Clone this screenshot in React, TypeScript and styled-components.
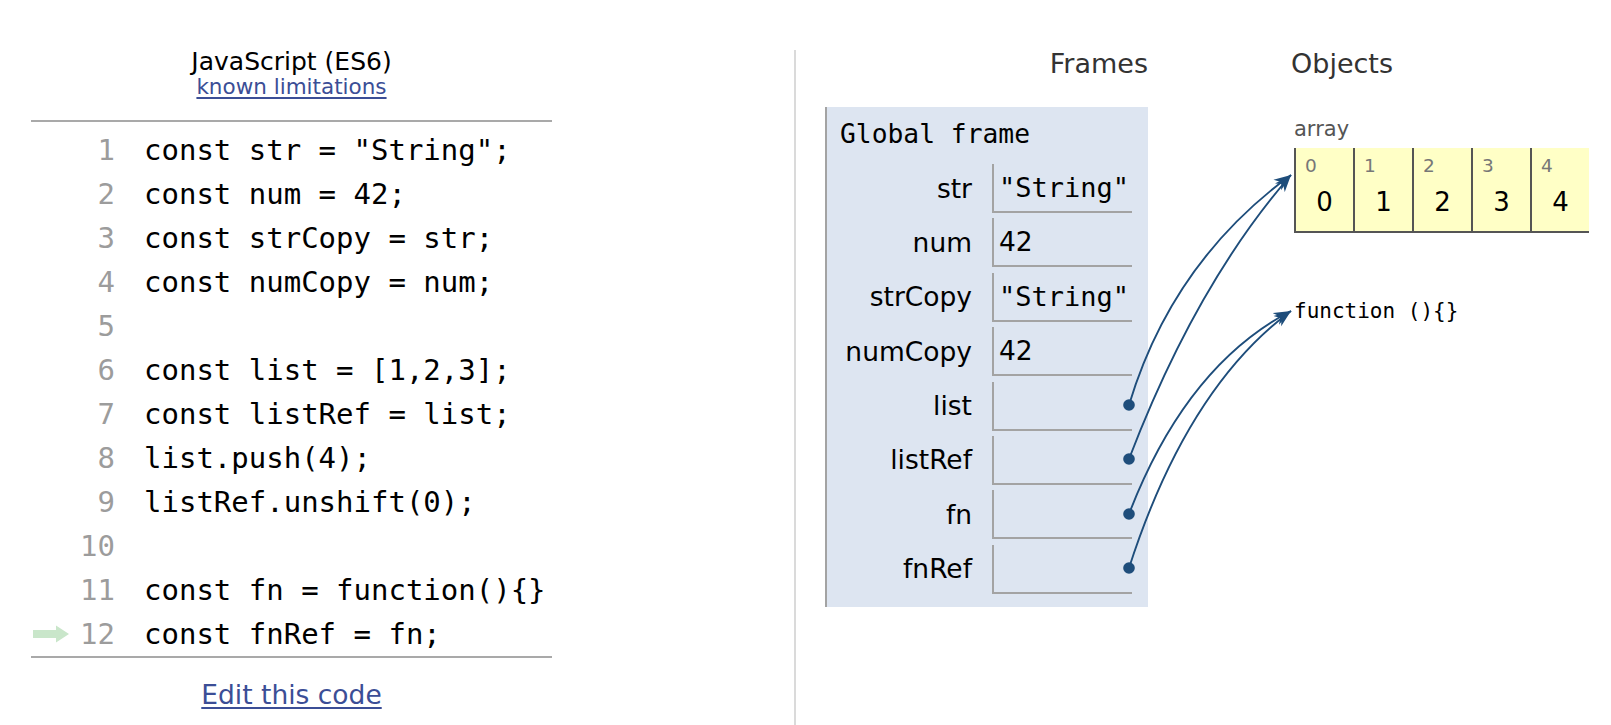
import React from "react"
import styled, { createGlobalStyle } from "styled-components"

const MONO = `"DejaVu Sans Mono", Menlo, monospace`
const SANS = `"DejaVu Sans", Verdana, sans-serif`
const ARROW = "#1e4d7b"

const GlobalStyle = createGlobalStyle`
    html, body {
        margin: 0;
        padding: 0;
        background: #fff;
        overflow: hidden;
    }
    body {
        font-family: ${SANS};
        color: #000;
    }
`

const codeLines = [
    'const str = "String";',
    "const num = 42;",
    "const strCopy = str;",
    "const numCopy = num;",
    "",
    "const list = [1,2,3];",
    "const listRef = list;",
    "list.push(4);",
    "listRef.unshift(0);",
    "",
    "const fn = function(){}",
    "const fnRef = fn;",
]

const currentLine = 12

type Binding = { name: string; value?: string; kind: "str" | "num" | "ref" }

const globals: Binding[] = [
    { name: "str", value: '"String"', kind: "str" },
    { name: "num", value: "42", kind: "num" },
    { name: "strCopy", value: '"String"', kind: "str" },
    { name: "numCopy", value: "42", kind: "num" },
    { name: "list", kind: "ref" },
    { name: "listRef", kind: "ref" },
    { name: "fn", kind: "ref" },
    { name: "fnRef", kind: "ref" },
]

const arrayItems = [0, 1, 2, 3, 4]

// pointer curves, from the dot in a frame slot to the heap object
const pointers = [
    { from: [1129, 405], ctrl: [1172, 262], to: [1291, 175] },
    { from: [1129, 459], ctrl: [1196, 284], to: [1291, 175] },
    { from: [1129, 514], ctrl: [1186, 366], to: [1291, 311] },
    { from: [1129, 568], ctrl: [1187, 388], to: [1291, 311] },
]

export default function App() {
    return (
        <Page>
            <GlobalStyle />
            <CodePanel>
                <Lang>JavaScript (ES6)</Lang>
                <Link href="#" $size={21.5} $lh={24}>known limitations</Link>
                <CodeBox>
                    {codeLines.map((line, i) => (
                        <CodeLine key={i}>
                            <Gutter>
                                {i + 1 === currentLine && (
                                    <svg width="36" height="18" viewBox="0 0 36 18">
                                        <path d="M0 5H23V0.5L36 9L23 17.5V13H0Z" fill="#c9e6ca" />
                                    </svg>
                                )}
                            </Gutter>
                            <LineNo>{i + 1}</LineNo>
                            <Code>{line}</Code>
                        </CodeLine>
                    ))}
                </CodeBox>
                <EditRow>
                    <Link href="#" $size={26.5} $lh={30}>Edit this code</Link>
                </EditRow>
            </CodePanel>

            <VizPanel>
                <FramesCol>
                    <ColHeader $align="right">Frames</ColHeader>
                    <Frame>
                        <FrameTitle>Global frame</FrameTitle>
                        <VarGrid>
                            {globals.map((b) => (
                                <React.Fragment key={b.name}>
                                    <VarName>{b.name}</VarName>
                                    <VarValue $mono={b.kind === "str"}>{b.value}</VarValue>
                                </React.Fragment>
                            ))}
                        </VarGrid>
                    </Frame>
                </FramesCol>
                <ObjectsCol>
                    <ColHeader $align="left">Objects</ColHeader>
                    <Heap>
                        <TypeLabel>array</TypeLabel>
                        <ArrayRow>
                            {arrayItems.map((v, i) => (
                                <ArrayCell key={i}>
                                    <ArrayIndex>{i}</ArrayIndex>
                                    <ArrayValue>{v}</ArrayValue>
                                </ArrayCell>
                            ))}
                        </ArrayRow>
                        <FuncObj>function (){"{}"}</FuncObj>
                    </Heap>
                </ObjectsCol>
            </VizPanel>

            <Arrows width="1611" height="725" viewBox="0 0 1611 725">
                <defs>
                    <marker
                        id="head"
                        markerUnits="userSpaceOnUse"
                        markerWidth="18"
                        markerHeight="14"
                        refX="17"
                        refY="7"
                        orient="auto"
                    >
                        <path d="M0 0.5L17 7L0 13.5L5 7Z" fill={ARROW} />
                    </marker>
                </defs>
                {pointers.map((p, i) => (
                    <g key={i}>
                        <path
                            d={`M${p.from[0]} ${p.from[1]} Q${p.ctrl[0]} ${p.ctrl[1]} ${p.to[0]} ${p.to[1]}`}
                            fill="none"
                            stroke={ARROW}
                            strokeWidth="1.9"
                            markerEnd="url(#head)"
                        />
                        <circle cx={p.from[0]} cy={p.from[1]} r="5.8" fill={ARROW} />
                    </g>
                ))}
            </Arrows>
        </Page>
    )
}

const Page = styled.div`
    position: relative;
    display: flex;
    align-items: flex-start;
    width: 1611px;
    height: 725px;
`

const CodePanel = styled.div`
    margin-left: 31px;
    width: 521px;
    padding-top: 48px;
    display: flex;
    flex-direction: column;
    align-items: center;
`

const Lang = styled.div`
    font-size: 25px;
    line-height: 27px;
    color: #000;
`

const Link = styled.a<{ $size: number; $lh: number }>`
    font-size: ${(p) => p.$size}px;
    line-height: ${(p) => p.$lh}px;
    color: #3b4e96;
    text-decoration: underline;
    text-underline-offset: 3px;
`

const CodeBox = styled.div`
    align-self: stretch;
    margin-top: 21px;
    padding-top: 6px;
    border-top: 2px solid #a9a9a9;
    border-bottom: 2px solid #a9a9a9;
`

const CodeLine = styled.div`
    display: grid;
    grid-template-columns: 40px 44px 1fr;
    align-items: center;
    height: 44px;
    font-family: ${MONO};
    font-size: 29px;
    white-space: pre;
`

const Gutter = styled.div`
    display: flex;
    align-items: center;
    padding-left: 2px;
`

const LineNo = styled.div`
    text-align: right;
    color: #9c9c9c;
`

const Code = styled.div`
    padding-left: 29px;
    color: #000;
`

const EditRow = styled.div`
    margin-top: 22px;
`

const VizPanel = styled.div`
    margin-left: 242px;
    margin-top: 50px;
    height: 675px;
    border-left: 2px solid #dadada;
    padding-left: 29px;
    display: flex;
    gap: 143px;
`

const FramesCol = styled.div`
    width: 323px;
    display: flex;
    flex-direction: column;
`

const ColHeader = styled.div<{ $align: "left" | "right" }>`
    font-size: 27px;
    line-height: 28px;
    color: #333;
    text-align: ${(p) => p.$align};
`

const Frame = styled.div`
    margin-top: 29px;
    background: #dde5f1;
    border-left: 2px solid #a3a3a3;
    padding: 9px 16px 13px 13px;
`

const FrameTitle = styled.div`
    font-family: ${MONO};
    font-size: 26.3px;
    line-height: 36px;
`

const VarGrid = styled.div`
    margin-top: 12px;
    display: grid;
    grid-template-columns: 1fr 140px;
    column-gap: 20px;
    row-gap: 5.4px;
`

const VarName = styled.div`
    align-self: center;
    text-align: right;
    font-size: 26.5px;
    line-height: 30px;
`

const VarValue = styled.div<{ $mono: boolean }>`
    height: 47px;
    display: flex;
    align-items: center;
    padding-left: 5px;
    border-left: 2px solid #a3a3a3;
    border-bottom: 2px solid #a3a3a3;
    font-family: ${(p) => (p.$mono ? MONO : SANS)};
    font-size: ${(p) => (p.$mono ? 27 : 26.5)}px;
    white-space: pre;
`

const ObjectsCol = styled.div`
    display: flex;
    flex-direction: column;
`

const Heap = styled.div`
    margin-top: 40px;
    padding-left: 3px;
    display: flex;
    flex-direction: column;
    align-items: flex-start;
`

const TypeLabel = styled.div`
    font-size: 21px;
    line-height: 23px;
    color: #555;
    margin-bottom: 7px;
`

const ArrayRow = styled.div`
    display: flex;
    background: #ffffc6;
    border-bottom: 2px solid #555;
`

const ArrayCell = styled.div`
    box-sizing: border-box;
    width: 59px;
    height: 83px;
    border-left: 2px solid #555;
    padding-top: 7px;
    display: flex;
    flex-direction: column;
`

const ArrayIndex = styled.div`
    font-size: 18.5px;
    line-height: 21px;
    color: #777;
    padding-left: 9px;
`

const ArrayValue = styled.div`
    margin-top: 11px;
    font-size: 26px;
    line-height: 30px;
    text-align: center;
`

const FuncObj = styled.div`
    margin-top: 65px;
    font-family: ${MONO};
    font-size: 21px;
    line-height: 26px;
    white-space: pre;
`

const Arrows = styled.svg`
    position: absolute;
    left: 0;
    top: 0;
    pointer-events: none;
`
